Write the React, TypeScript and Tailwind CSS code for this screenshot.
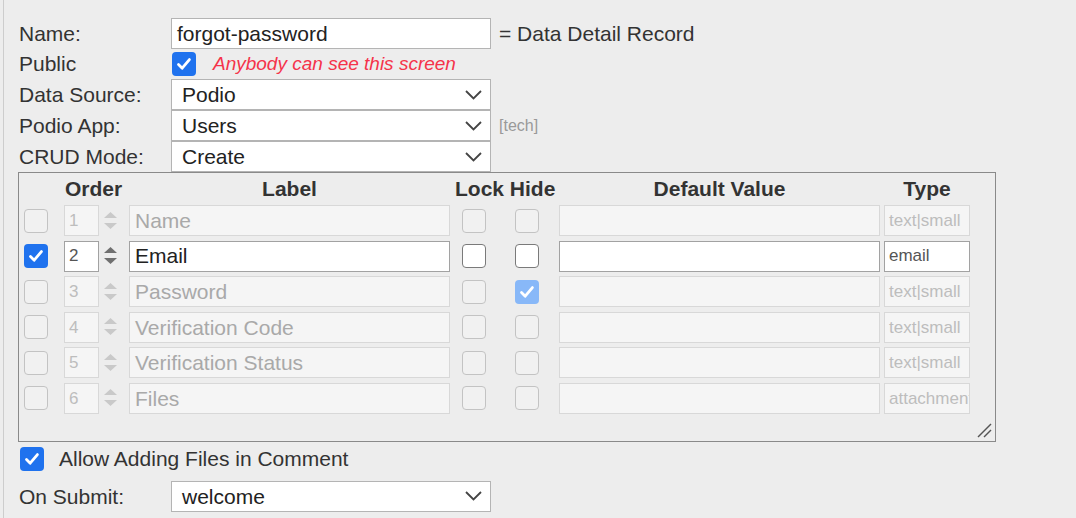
import React from "react"

const font = { fontFamily: '"Liberation Sans", Arial, Helvetica, sans-serif' }

type CbProps = { checked?: boolean; disabled?: boolean }

function Checkbox({ checked, disabled }: CbProps) {
  if (checked) {
    return (
      <div
        className={`flex h-[24px] w-[24px] shrink-0 items-center justify-center rounded-[4px] ${
          disabled ? "bg-[#88b8f8]" : "bg-[#1f72ee]"
        }`}
      >
        <svg width="16" height="16" viewBox="0 0 16 16">
          <path d="M2.5 8.6 L6.2 12.2 L13.4 3.6" fill="none" stroke="#fff" strokeWidth="2.8" strokeLinecap="round" strokeLinejoin="round" />
        </svg>
      </div>
    )
  }
  return (
    <div
      className={`h-[24px] w-[24px] shrink-0 rounded-[4px] border ${
        disabled ? "border-[#c3c3c3] bg-[#f1f1f1]" : "border-[#7a7a7a] bg-white"
      }`}
    />
  )
}

function Chevron() {
  return (
    <svg width="17" height="10" viewBox="0 0 17 10" className="shrink-0">
      <path d="M1 1 L8.5 8.5 L16 1" fill="none" stroke="#444" strokeWidth="1.8" />
    </svg>
  )
}

function Select({ value }: { value: string }) {
  return (
    <div className="flex h-[31px] w-[320px] shrink-0 items-center justify-between border border-[#b4b4b4] bg-white pl-[10px] pr-[8px] text-[21px] text-[#222]">
      <span>{value}</span>
      <Chevron />
    </div>
  )
}

function Spinner({ disabled }: { disabled: boolean }) {
  const c = disabled ? "#c9c9c9" : "#707070"
  return (
    <svg width="13" height="18" viewBox="0 0 13 18" className="shrink-0">
      <path d="M6.5 0 L13 6 L0 6 Z" fill={c} />
      <path d="M0 11 L13 11 L6.5 17 Z" fill={c} />
    </svg>
  )
}

const rows = [
  { n: 1, label: "Name", type: "text|small", on: false, hide: false },
  { n: 2, label: "Email", type: "email", on: true, hide: false },
  { n: 3, label: "Password", type: "text|small", on: false, hide: true },
  { n: 4, label: "Verification Code", type: "text|small", on: false, hide: false },
  { n: 5, label: "Verification Status", type: "text|small", on: false, hide: false },
  { n: 6, label: "Files", type: "attachment", on: false, hide: false },
]

function FieldRow({ r }: { r: (typeof rows)[number] }) {
  const box = r.on
    ? "border-[#a2a2a2] bg-white"
    : "border-[#d8d8d8] bg-[#f5f5f5]"
  return (
    <div className="flex h-[31px] items-center">
      <Checkbox checked={r.on} disabled={!r.on} />
      <div className={`ml-[16px] flex h-[31px] w-[35px] shrink-0 items-center border pl-[4px] text-[17px] ${box} ${r.on ? "text-[#555]" : "text-[#bdbdbd]"}`}>
        {r.n}
      </div>
      <div className="ml-[5px]">
        <Spinner disabled={!r.on} />
      </div>
      <div className={`ml-[12px] flex h-[31px] w-[321px] shrink-0 items-center border pl-[5px] text-[21px] ${box} ${r.on ? "text-[#222]" : "text-[#a9a9a9]"}`}>
        {r.label}
      </div>
      <div className="ml-[12px]">
        <Checkbox disabled={!r.on} />
      </div>
      <div className="ml-[29px]">
        <Checkbox checked={r.hide} disabled={!r.on} />
      </div>
      <div className={`ml-[20px] h-[31px] w-[321px] shrink-0 border ${box}`} />
      <div className={`ml-[4px] flex h-[31px] w-[86px] shrink-0 items-center overflow-hidden whitespace-nowrap border pl-[4px] text-[17px] ${box} ${r.on ? "text-[#555]" : "text-[#bdbdbd]"}`}>
        {r.type}
      </div>
    </div>
  )
}

export default function App() {
  return (
    <div className="min-h-[518px] w-[1076px] bg-[#ededed] pl-[3px]" style={font}>
      <div className="min-h-[518px] border-l border-[#cdcdcd] pl-[15px] pt-[18px] text-[21px] text-[#333]">
        {/* top form */}
        <div className="flex h-[31px] items-center">
          <div className="w-[152px] shrink-0">Name:</div>
          <div className="flex h-[31px] w-[320px] shrink-0 items-center border border-[#b4b4b4] bg-white pl-[5px] text-[#222]">
            forgot-password
          </div>
          <span className="ml-[8px] whitespace-nowrap">= Data Detail Record</span>
        </div>
        <div className="flex h-[30px] items-center">
          <div className="w-[152px] shrink-0">Public</div>
          <div className="ml-[1px]">
            <Checkbox checked />
          </div>
          <span className="ml-[17px] text-[19px] italic text-[#f5334a]">Anybody can see this screen</span>
        </div>
        <div className="flex h-[31px] items-center">
          <div className="w-[152px] shrink-0">Data Source:</div>
          <Select value="Podio" />
        </div>
        <div className="flex h-[31px] items-center">
          <div className="w-[152px] shrink-0">Podio App:</div>
          <Select value="Users" />
          <span className="ml-[8px] text-[16px] text-[#999]">[tech]</span>
        </div>
        <div className="flex h-[31px] items-center">
          <div className="w-[152px] shrink-0">CRUD Mode:</div>
          <Select value="Create" />
        </div>

        {/* fields table */}
        <div className="relative ml-[-1px] w-[978px] border border-[#8a8a8a] pb-[27px] pl-[5px]">
          <div className="flex h-[32px] items-center whitespace-nowrap font-bold text-[#333]">
            <div className="w-[24px] shrink-0" />
            <div className="ml-[17px] w-[64px] shrink-0">Order</div>
            <div className="w-[321px] shrink-0 text-center">Label</div>
            <div className="w-[109px] shrink-0 pl-[5px]">Lock Hide</div>
            <div className="w-[321px] shrink-0 text-center">Default Value</div>
            <div className="ml-[4px] w-[86px] shrink-0 text-center">Type</div>
          </div>
          <div className="flex flex-col gap-[4.6px]">
            {rows.map((r) => (
              <FieldRow key={r.n} r={r} />
            ))}
          </div>
          <svg width="15" height="15" viewBox="0 0 15 15" className="absolute bottom-[3px] right-[3px]">
            <path d="M1 14 L14 1" stroke="#555" strokeWidth="1.4" />
            <path d="M7 14 L14 7" stroke="#555" strokeWidth="1.4" />
          </svg>
        </div>

        <div className="mt-[5px] flex h-[24px] items-center">
          <div className="ml-[1px]">
            <Checkbox checked />
          </div>
          <span className="ml-[15px]">Allow Adding Files in Comment</span>
        </div>
        <div className="mt-[10px] flex h-[31px] items-center">
          <div className="w-[152px] shrink-0">On Submit:</div>
          <Select value="welcome" />
        </div>
      </div>
    </div>
  )
}
